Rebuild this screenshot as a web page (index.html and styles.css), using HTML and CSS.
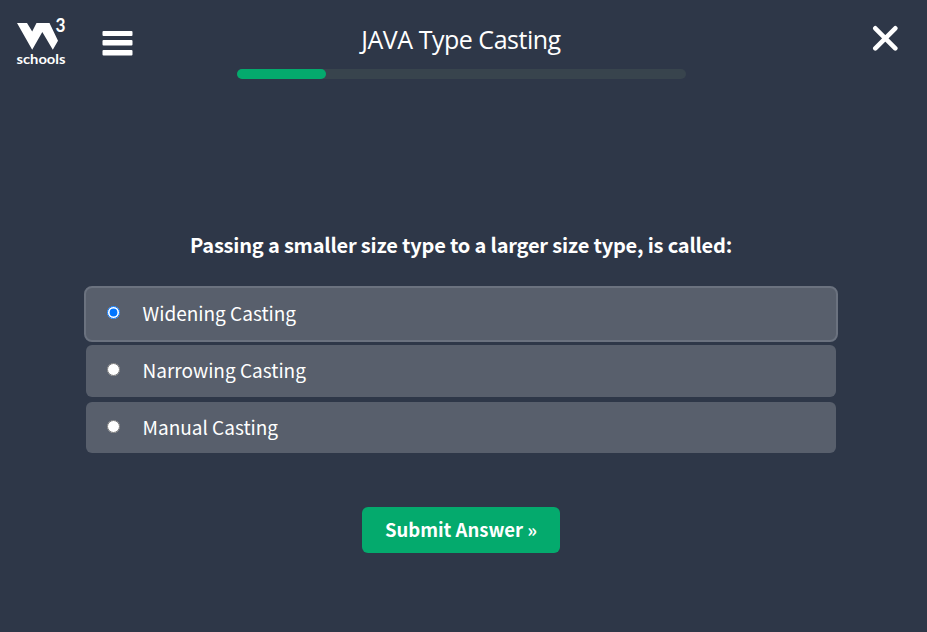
FILE: index.html
```html
<!DOCTYPE html>
<html lang="en">
<head>
<meta charset="utf-8">
<title>JAVA Type Casting</title>
<link rel="stylesheet" href="styles.css">
</head>
<body>
<header class="topbar">
  <div class="nav">
    <svg class="logo" width="56" height="60" viewBox="0 -8 56 60" role="img" aria-label="W3Schools">
      <path d="M2 5H12L17.2 13.6L21.5 5H34.5L43 22.7L37.8 31.8L27.3 14L17.2 31.8Z"/>
      <text class="logo-three" x="40.5" y="14" textLength="10" lengthAdjust="spacingAndGlyphs">3</text>
      <text class="logo-name" x="1.5" y="46" textLength="49" lengthAdjust="spacingAndGlyphs">schools</text>
    </svg>
    <svg class="menu" width="31" height="26" viewBox="0 0 31 26" aria-label="Menu">
      <rect x="0.5" y="1" width="30" height="5" rx="1"/>
      <rect x="0.5" y="10" width="30" height="5.5" rx="1"/>
      <rect x="0.5" y="20" width="30" height="5.5" rx="1"/>
    </svg>
  </div>
  <div class="heading">
    <h1 class="title">JAVA Type Casting</h1>
    <div class="progress"><div class="progress-value"></div></div>
  </div>
  <svg class="close" width="26" height="26" viewBox="0 0 26 26" aria-label="Close">
    <path d="M3.3 3.3L23.3 23.3M23.3 3.3L3.3 23.3"/>
  </svg>
</header>
<main class="quiz">
  <h2 class="question">Passing a smaller size type to a larger size type, is called:</h2>
  <form class="answers">
    <label class="answer selected"><input type="radio" name="answer" checked><span class="answer-text">Widening Casting</span></label>
    <label class="answer"><input type="radio" name="answer"><span class="answer-text">Narrowing Casting</span></label>
    <label class="answer last"><input type="radio" name="answer"><span class="answer-text">Manual Casting</span></label>
    <button class="submit" type="button">Submit Answer »</button>
  </form>
</main>
</body>
</html>
```
FILE: styles.css
```css
* { box-sizing: border-box; }
body {
  margin: 0;
  height: 632px;
  overflow: hidden;
  background: #2e3748;
  color: #fff;
  font-family: "Noto Sans CJK SC", sans-serif;
}
.topbar {
  display: grid;
  grid-template-columns: 237px 449px 1fr;
  height: 90px;
}
.nav {
  display: flex;
  align-items: flex-start;
  padding: 10px 0 0 15px;
}
.logo, .menu { fill: #fff; }
.logo-three { font: 700 18px Lato, sans-serif; }
.logo-name { font: 700 13px Lato, sans-serif; }
.menu { margin: 20px 0 0 31px; }
.title {
  margin: 0;
  padding: 22px 1px 0 0;
  height: 69px;
  font: 400 25px/34px "Open Sans", sans-serif;
  letter-spacing: -0.48px;
  text-align: center;
  white-space: nowrap;
}
.progress {
  height: 10px;
  border-radius: 5px;
  background: #38444d;
}
.progress-value {
  width: 89px;
  height: 10px;
  border-radius: 5px;
  background: #04aa6d;
}
.close {
  justify-self: end;
  margin: 25px 29px 0 0;
  fill: none;
  stroke: #fff;
  stroke-width: 4.6;
  stroke-linecap: round;
}
.quiz {
  width: 754px;
  margin: 0 0 0 84px;
  padding-top: 140px;
}
.question {
  margin: 0 0 26px;
  font-size: 20px;
  line-height: 30px;
  font-weight: 700;
  letter-spacing: -0.19px;
  text-align: center;
  white-space: nowrap;
}
.answers {
  display: flex;
  flex-direction: column;
  align-items: center;
}
.answer {
  display: flex;
  align-items: center;
  width: 750px;
  height: 52px;
  margin-bottom: 5px;
  padding-left: 21px;
  border-radius: 6px;
  background: #585f6c;
  font-size: 19px;
  line-height: 28px;
  white-space: nowrap;
}
.answer.selected {
  width: 754px;
  height: 56px;
  margin-bottom: 3px;
  border: 2px solid #6b727f;
  border-radius: 8px;
}
.answer.last { height: 51px; margin-bottom: 54px; }
.answer input {
  width: 13px;
  height: 13px;
  margin: 0 22.5px 3px 0;
}
.answer-text {
  padding-bottom: 3px;
}
.last .answer-text { padding-bottom: 1px; }
.submit {
  width: 198px;
  height: 46px;
  padding: 0 0 2px;
  border: 0;
  border-radius: 6px;
  background: #04aa6d;
  color: #fff;
  font: 700 18.5px "Noto Sans CJK SC", sans-serif;
}
```
